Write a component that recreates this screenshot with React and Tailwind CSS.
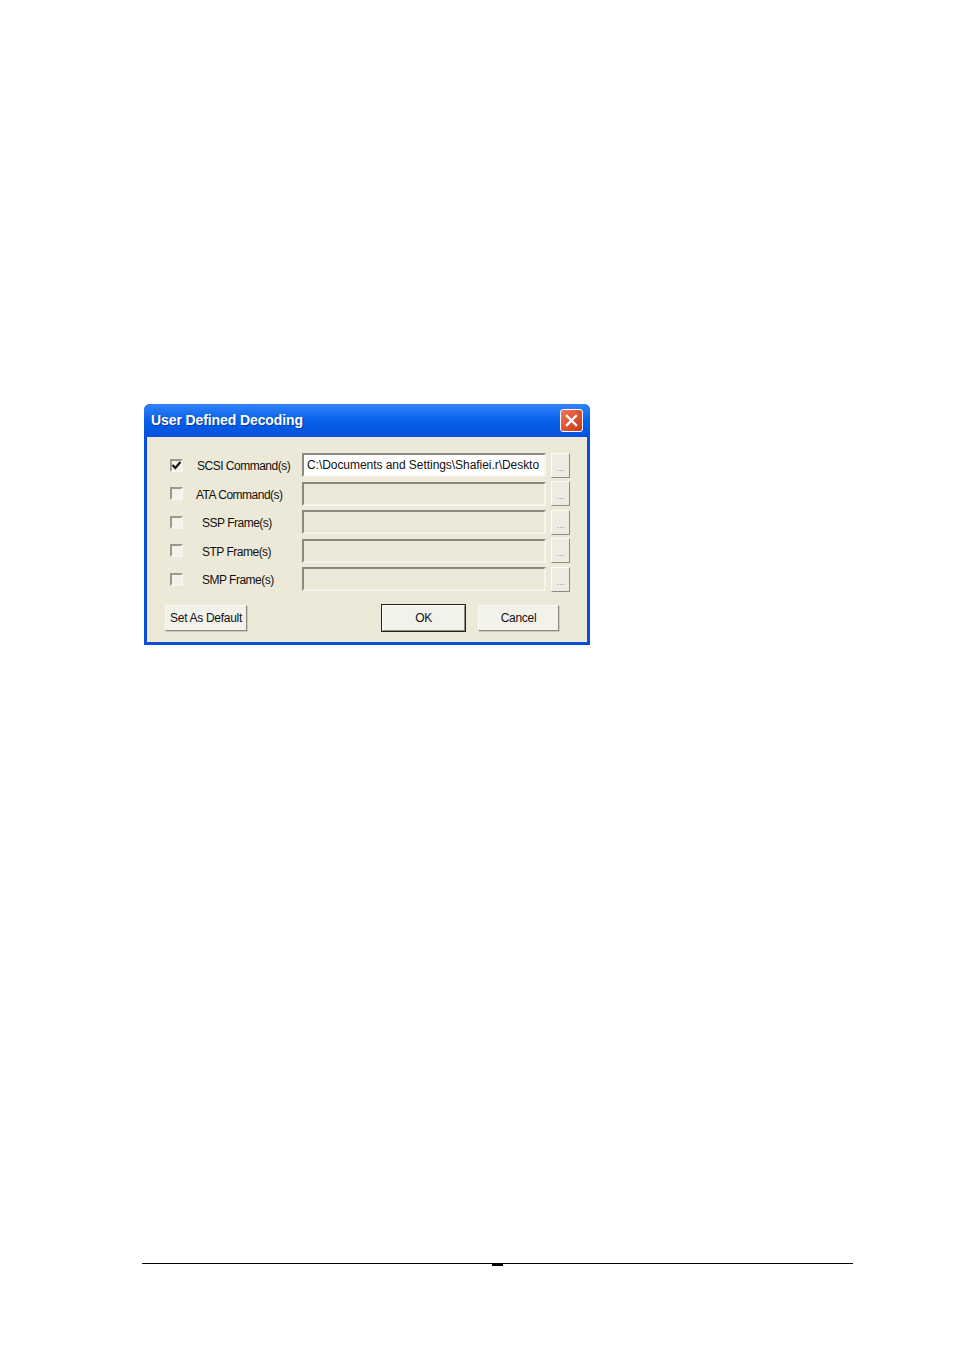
import React from "react";

const ROWS = [
  { label: "SCSI Command(s)", checked: true, value: "C:\\Documents and Settings\\Shafiei.r\\Deskto", indent: "pl-[14px]" },
  { label: "ATA Command(s)", checked: false, value: "", indent: "pl-[13px]" },
  { label: "SSP Frame(s)", checked: false, value: "", indent: "pl-[19px]" },
  { label: "STP Frame(s)", checked: false, value: "", indent: "pl-[19px]" },
  { label: "SMP Frame(s)", checked: false, value: "", indent: "pl-[19px]" },
];

function CheckBox({ checked }) {
  return (
    <div className="w-[13px] h-[13px] border-2 border-t-[#9b988c] border-l-[#9b988c] border-r-[#f6f5f0] border-b-[#f6f5f0] bg-[#f3f1ea] flex items-center justify-center">
      {checked && (
        <svg width="9" height="9" viewBox="0 0 9 9">
          <path d="M0.5 4 L3.3 7 L8.5 1" stroke="#111" strokeWidth="2.2" fill="none" />
        </svg>
      )}
    </div>
  );
}

function XpButton({ children, className = "" }) {
  return (
    <div
      className={`h-[26px] flex items-center justify-center bg-[#f2f1ea] text-[12px] tracking-[-0.3px] text-[#111] border border-t-[#fbfbf8] border-l-[#fbfbf8] border-r-[#8e8b80] border-b-[#8e8b80] shadow-[1px_1px_0_#cbc8bb] ${className}`}
    >
      {children}
    </div>
  );
}

export default function App() {
  return (
    <div className="w-[955px] h-[1350px] bg-white font-['Liberation_Sans',Arial,sans-serif] overflow-hidden">
      <div className="pt-[404px] pl-[144px]">
        {/* dialog */}
        <div className="w-[446px] bg-[#0a4fd9] px-[3px] pb-[3px] rounded-t-[6px]">
          {/* title bar */}
          <div className="h-[33px] -mx-[3px] px-[7px] rounded-t-[6px] bg-gradient-to-b from-[#2f83f7] via-[#0660ea] to-[#0551dc] flex items-center justify-between">
            <span className="text-white font-bold text-[14px] tracking-[-0.1px] [text-shadow:1px_1px_0_#0b3aa8]">
              User Defined Decoding
            </span>
            <div className="w-[23px] h-[23px] rounded-[3px] border border-white bg-gradient-to-br from-[#e97a5f] via-[#e0512f] to-[#c23b1c] flex items-center justify-center">
              <svg width="13" height="13" viewBox="0 0 13 13">
                <path d="M2 2 L11 11 M11 2 L2 11" stroke="white" strokeWidth="2.4" strokeLinecap="square" />
              </svg>
            </div>
          </div>

          {/* body */}
          <div className="bg-[#ece9d8] pt-[16px] pb-[11px]">
            <div className="flex flex-col gap-[4.6px]">
              {ROWS.map((r) => (
                <div key={r.label} className="flex items-center h-[24px]">
                  <div className="pl-[23px]">
                    <CheckBox checked={r.checked} />
                  </div>
                  <div className={`w-[119px] ${r.indent} text-[12px] tracking-[-0.5px] text-[#111] leading-none pt-[2px]`}>
                    {r.label}
                  </div>
                  <div
                    className={`w-[244px] h-[24px] flex items-center pl-[3px] text-[12px] tracking-[-0.05px] text-[#111] whitespace-nowrap overflow-hidden border-2 border-t-[#8c8a80] border-l-[#8c8a80] border-r-[#f4f3ee] border-b-[#f4f3ee] ${
                      r.checked ? "bg-white" : "bg-[#ece9d8]"
                    }`}
                  >
                    {r.value}
                  </div>
                  <div className="ml-[5px] w-[19px] h-[25px] flex items-end justify-center pb-[4px] bg-[#eeece2] border border-t-[#fbfbf8] border-l-[#fbfbf8] border-r-[#8e8b80] border-b-[#8e8b80] text-[9px] leading-none text-[#888]">
                    ...
                  </div>
                </div>
              ))}
            </div>

            <div className="flex items-center mt-[14px]">
              <XpButton className="ml-[18px] w-[82px]">Set As Default</XpButton>
              <XpButton className="ml-[135px] w-[83px] outline outline-1 outline-[#222]">OK</XpButton>
              <XpButton className="ml-[13px] w-[81px]">Cancel</XpButton>
            </div>
          </div>
        </div>
      </div>

      {/* page footer rule */}
      <div className="mt-[618px] ml-[142px] w-[711px] h-px bg-black" />
      <div className="ml-[492px] w-[11px] h-[2px] bg-black" />
    </div>
  );
}
